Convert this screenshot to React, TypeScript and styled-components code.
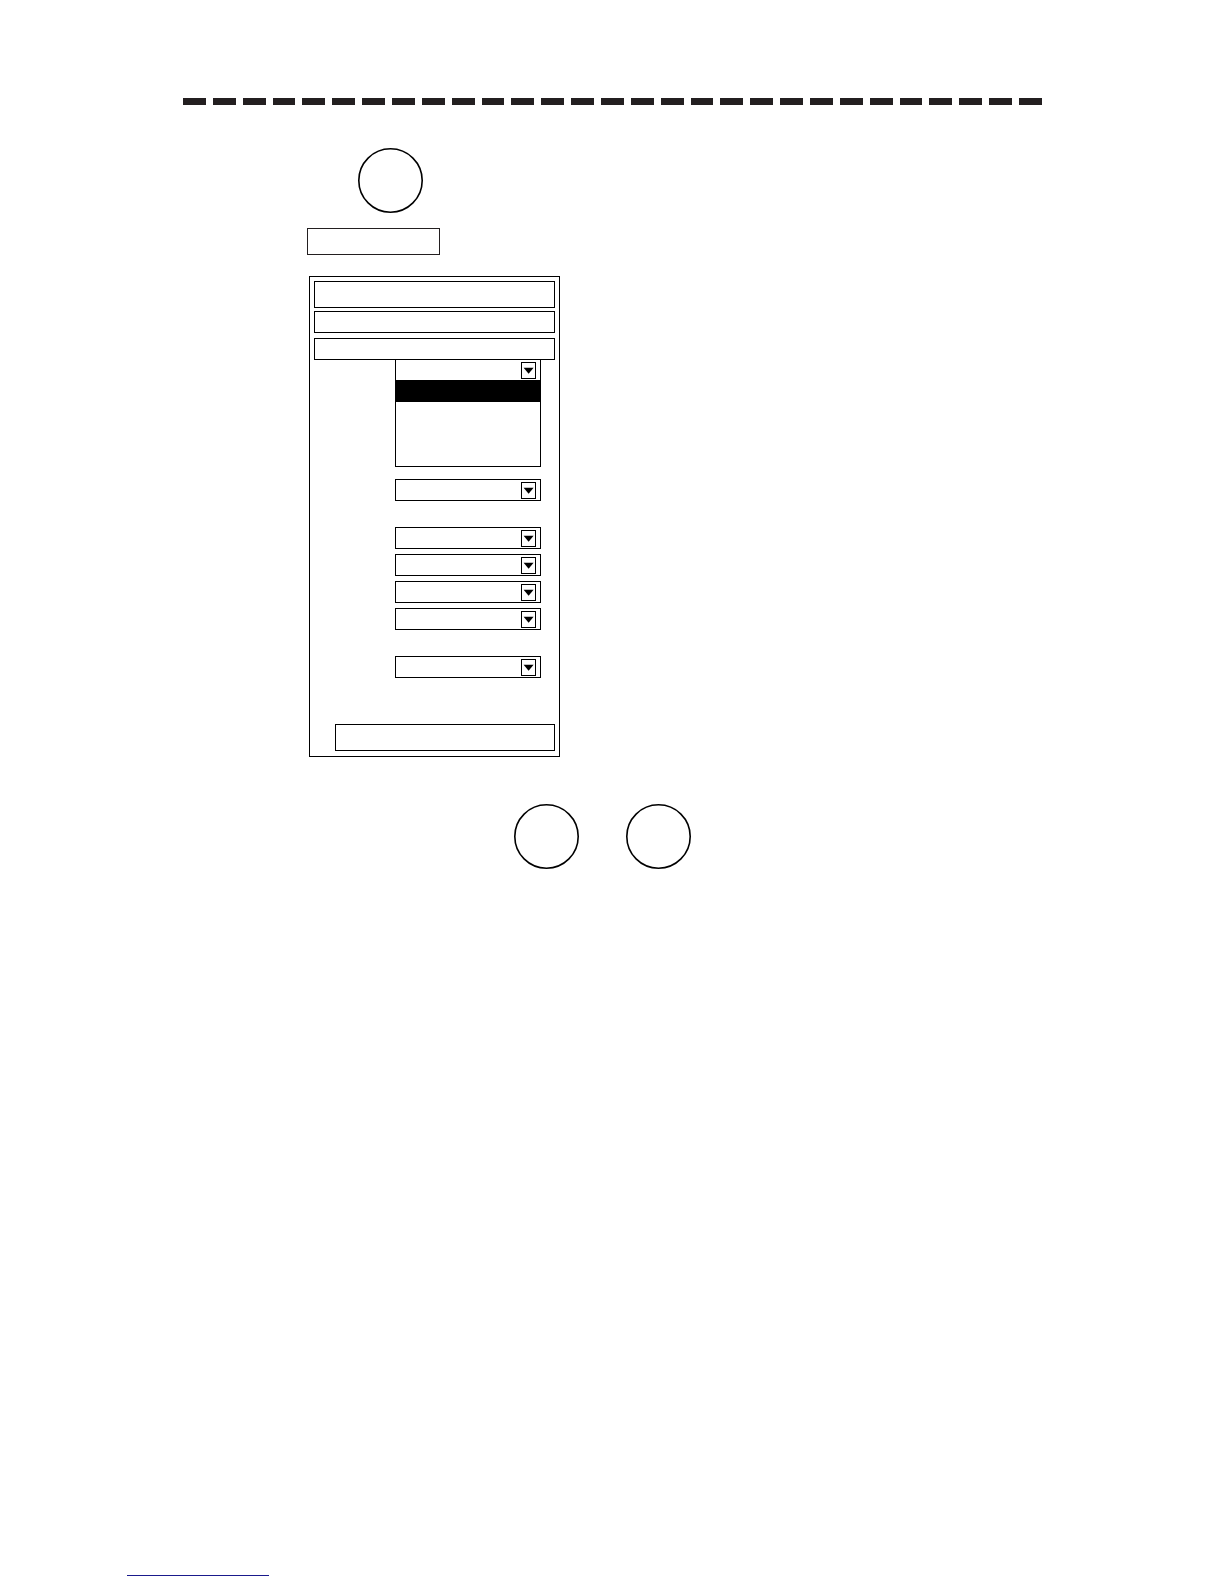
import React from "react";
import styled, { createGlobalStyle } from "styled-components";

const GlobalStyle = createGlobalStyle`
  *, *::before, *::after { box-sizing: border-box; }
  body {
    margin: 0;
    background: #fff;
    font-family: "Liberation Sans", Arial, sans-serif;
    font-size: 12px;
  }
`;

const Page = styled.div`
  display: flex;
  flex-direction: column;
  min-height: 100vh;
  padding: 98px 0 8px;
`;

const DashedRule = styled.div`
  display: flex;
  gap: 7px;
  height: 7px;
  margin: 0 182px 0 183px;
`;

const Dash = styled.span`
  flex: 1;
  background: #231f20;
`;

const Main = styled.main`
  display: flex;
  flex-direction: column;
  align-items: flex-start;
  padding: 43px 16px 40px 307px;
`;

const KeyRow = styled.div<{ $indent: number }>`
  display: flex;
  gap: 47px;
  padding-left: ${(p) => p.$indent}px;
`;

const RoundKey = styled.button`
  display: block;
  width: 65px;
  height: 65px;
  padding: 0;
  border: 0;
  border-radius: 50%;
  background: transparent;

  svg {
    display: block;
  }
`;

const SoftKey = styled.button`
  width: 133px;
  height: 27px;
  margin: 15px 0 21px;
  padding: 0;
  border: 1px solid #231f20;
  background: #fff;
`;

const Panel = styled.section`
  display: flex;
  flex-direction: column;
  width: 251px;
  margin: 0 0 47px 2px;
  padding: 4px 4px 5px;
  border: 1px solid #000;
  background: #fff;
`;

const Title = styled.header`
  height: 27px;
  margin-bottom: 3px;
  border: 1px solid #000;
`;

const MenuItem = styled.button`
  height: 22px;
  padding: 0;
  border: 1px solid #000;
  background: #fff;

  & + & {
    margin-top: 5px;
  }
`;

const Settings = styled.form`
  display: flex;
  flex-direction: column;
  gap: 26px;
  padding: 0 14px 46px 81px;
`;

const Group = styled.div<{ $gap: number }>`
  display: flex;
  flex-direction: column;
  gap: ${(p) => p.$gap}px;
`;

const Field = styled.div`
  position: relative;
  height: 22px;
`;

const Select = styled.select`
  appearance: none;
  display: block;
  width: 100%;
  height: 100%;
  padding: 0 24px 0 4px;
  border: 1px solid #000;
  border-radius: 0;
  background: #fff;
`;

const ArrowBox = styled.span`
  position: absolute;
  top: 3px;
  right: 5px;
  width: 15px;
  height: 17px;
  border: 1px solid #000;
  pointer-events: none;

  svg {
    display: block;
  }
`;

const OpenField = styled.div`
  border: 1px solid #000;
  border-top: 0;
`;

const OpenValue = styled.button`
  position: relative;
  display: block;
  width: 100%;
  height: 20px;
  padding: 0;
  border: 0;
  background: #fff;

  ${ArrowBox} {
    top: 2px;
    right: 4px;
  }
`;

const Options = styled.ul`
  height: 86px;
  margin: 0;
  padding: 0;
  list-style: none;
`;

const Option = styled.li`
  height: 21px;

  &[aria-selected="true"] {
    height: 22px;
    background: #000;
  }
`;

const Footer = styled.footer`
  display: flex;
  margin-top: auto;
  padding-left: 127px;
`;

const FooterLink = styled.a`
  width: 142px;
  border-bottom: 1px solid #1a1a8c;
`;

const Message = styled.footer`
  height: 27px;
  margin-left: 21px;
  border: 1px solid #000;
`;

function Arrow() {
  return (
    <ArrowBox>
      <svg width="13" height="15" viewBox="0 0 13 15" aria-hidden="true">
        <path d="M1.6 4.7H11.6L6.6 10.8Z" fill="#000" />
      </svg>
    </ArrowBox>
  );
}

function Key({ label }: { label: string }) {
  return (
    <RoundKey type="button" aria-label={label}>
      <svg width="65" height="65" viewBox="0 0 65 65" aria-hidden="true">
        <circle cx="32.5" cy="32.5" r="31.7" fill="none" stroke="#000" strokeWidth="1.6" />
      </svg>
    </RoundKey>
  );
}

function Dropdown({ label }: { label: string }) {
  return (
    <Field>
      <Select aria-label={label} />
      <Arrow />
    </Field>
  );
}

export default function App() {
  return (
    <>
      <GlobalStyle />
      <Page>
        <DashedRule role="separator">
          {Array.from({ length: 29 }, (_, i) => (
            <Dash key={i} />
          ))}
        </DashedRule>
        <Main>
          <KeyRow $indent={51}>
            <Key label="Menu key" />
          </KeyRow>
          <SoftKey type="button" aria-label="Soft key" />
          <Panel aria-label="Settings menu">
            <Title />
            <MenuItem type="button" aria-label="Menu item 1" />
            <MenuItem type="button" aria-label="Menu item 2" />
            <Settings>
              <Group $gap={12}>
                <OpenField>
                  <OpenValue type="button" aria-label="Setting 1" aria-haspopup="listbox" aria-expanded="true">
                    <Arrow />
                  </OpenValue>
                  <Options role="listbox" aria-label="Setting 1 options">
                    <Option role="option" aria-selected="true" />
                    <Option role="option" aria-selected="false" />
                    <Option role="option" aria-selected="false" />
                    <Option role="option" aria-selected="false" />
                  </Options>
                </OpenField>
                <Dropdown label="Setting 2" />
              </Group>
              <Group $gap={5}>
                <Dropdown label="Setting 3" />
                <Dropdown label="Setting 4" />
                <Dropdown label="Setting 5" />
                <Dropdown label="Setting 6" />
              </Group>
              <Dropdown label="Setting 7" />
            </Settings>
            <Message />
          </Panel>
          <KeyRow $indent={207}>
            <Key label="Left key" />
            <Key label="Right key" />
          </KeyRow>
        </Main>
        <Footer>
          <FooterLink href="#" aria-label="Website" />
        </Footer>
      </Page>
    </>
  );
}
